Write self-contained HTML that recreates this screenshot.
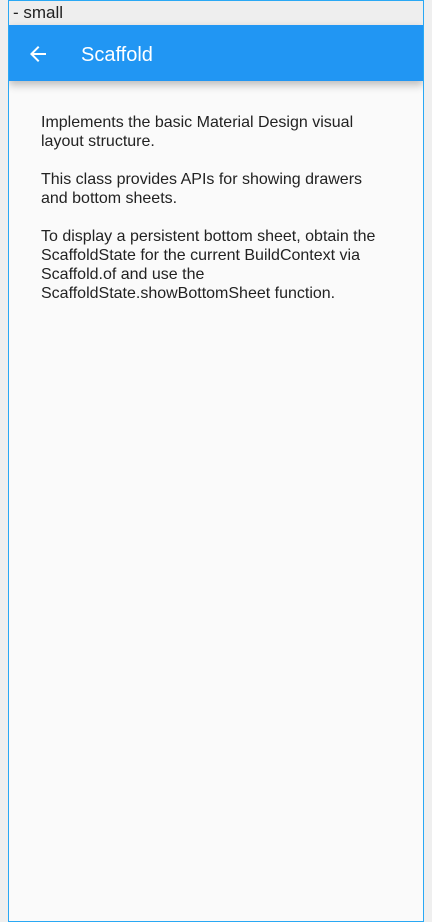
<!DOCTYPE html>
<html><head><style>
html,body{margin:0;padding:0;width:432px;height:922px;background:#efefef;overflow:hidden;font-family:"Liberation Sans",Roboto,sans-serif;}
.frame{position:absolute;left:8px;top:0;width:414px;height:920px;border:1px solid #29a8f4;background:#fafafa;overflow:hidden;}
.lbl{position:absolute;left:0;top:0;width:414px;height:24px;background:#eeeeee;color:#222;font-size:17px;line-height:24px;padding-left:4px;box-sizing:border-box;}
.bar{position:absolute;left:0;top:24px;width:414px;height:56px;background:#2196f3;box-shadow:0 4px 8px rgba(0,0,0,0.25);}
.title{position:absolute;left:72px;top:2px;line-height:56px;color:#fff;font-size:20px;}
.arrow{position:absolute;left:17px;top:17px;}
.txt{position:absolute;left:32px;top:112px;width:342px;color:#222;font-size:16px;line-height:19px;}
.txt p{margin:0 0 19px 0;}
</style></head><body>
<div class="frame">
<div class="lbl">- small</div>
<div class="bar">
<svg class="arrow" width="24" height="24" viewBox="0 0 24 24"><path d="M20 11H7.83l5.59-5.59L12 4l-8 8 8 8 1.41-1.41L7.83 13H20v-2z" fill="#fff"/></svg>
<div class="title">Scaffold</div>
</div>
<div class="txt">
<p>Implements the basic Material Design visual layout structure.</p>
<p>This class provides APIs for showing drawers and bottom sheets.</p>
<p>To display a persistent bottom sheet, obtain the ScaffoldState for the current BuildContext via Scaffold.of and use the ScaffoldState.showBottomSheet function.</p>
</div>
</div>
</body></html>
